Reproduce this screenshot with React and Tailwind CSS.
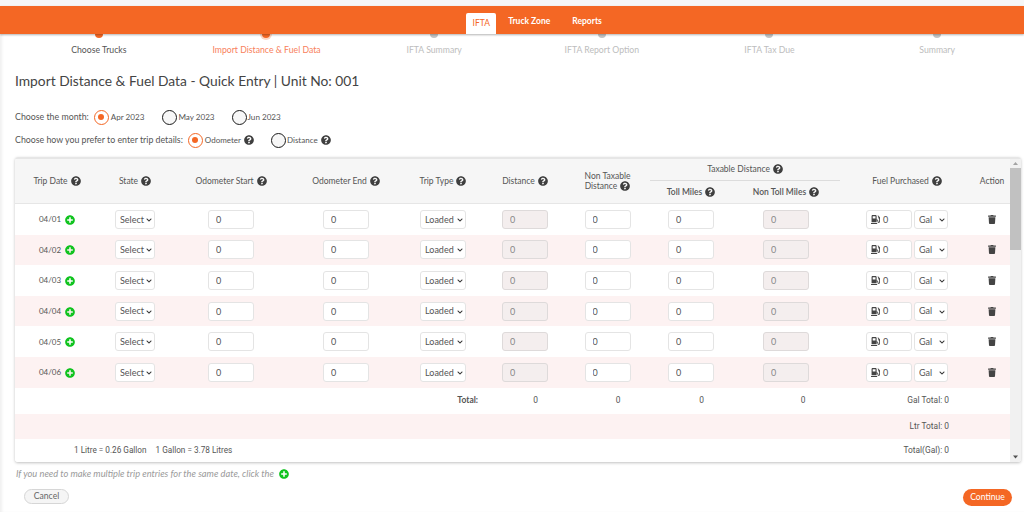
import React from 'react';
import { FaQuestionCircle, FaPlusCircle, FaTrash, FaGasPump, FaChevronDown } from 'react-icons/fa';

const steps = ['Choose Trucks', 'Import Distance & Fuel Data', 'IFTA Summary', 'IFTA Report Option', 'IFTA Tax Due', 'Summary'];
const dates = ['04/01', '04/02', '04/03', '04/04', '04/05', '04/06'];
const cols = 'grid grid-cols-[84px_72px_120px_110px_84px_80px_85px_82px_108px_134px_36px]';

function Help() {
  return <FaQuestionCircle className="inline-block w-[10px] h-[10px] text-[#3f3f3f] ml-[3px] align-[-2px]" />;
}

function Radio({ on, className = '' }) {
  if (on) {
    return (
      <span className={`shrink-0 w-[15px] h-[15px] rounded-full border border-[#f46724] flex items-center justify-center bg-white ${className}`}>
        <span className="w-[6px] h-[6px] rounded-full bg-[#f46724]" />
      </span>
    );
  }
  return <span className={`shrink-0 w-[15px] h-[15px] rounded-full border border-[#1a1a1a] bg-[#f7f7f7] ${className}`} />;
}

function Box({ disabled }) {
  return (
    <input
      defaultValue="0"
      readOnly
      className={`w-[46px] h-[19px] rounded-[3px] border pl-[7px] text-[9px] outline-none ${
        disabled ? 'bg-[#f4eeee] border-[#dedada] text-[#888]' : 'bg-white border-[#e4e4e4] text-[#555]'
      }`}
    />
  );
}

function Sel({ label, width }) {
  return (
    <div className={`relative ${width} h-[19px]`}>
      <select className="block appearance-none w-full h-full rounded-[3px] border border-[#e4e4e4] bg-white pl-[4px] text-[9px] text-[#555] outline-none">
        <option>{label}</option>
      </select>
      <FaChevronDown className="absolute right-[3px] top-[7px] w-[6px] h-[6px] text-[#333] pointer-events-none" />
    </div>
  );
}

function HeadCell({ children, className = '' }) {
  return <div className={`row-span-2 flex items-center justify-center text-center leading-[10px] ${className}`}>{children}</div>;
}

function Row({ date, pink }) {
  return (
    <div className={`${cols} h-[30.6px] items-center justify-items-center ${pink ? 'bg-[#fdf2f2]' : 'bg-white'}`}>
      <div className="flex items-center text-[8px] text-[#555]">
        {date}
        <FaPlusCircle className="w-[10px] h-[10px] text-[#10c31f] ml-[4px] mt-[1px]" />
      </div>
      <Sel label="Select" width="w-[40px]" />
      <Box />
      <Box />
      <Sel label="Loaded" width="w-[46px]" />
      <Box disabled />
      <Box />
      <Box />
      <Box disabled />
      <div className="flex gap-[2px]">
        <div className="flex items-center w-[46px] h-[19px] rounded-[3px] border border-[#e4e4e4] bg-white pl-[4px] text-[9px] text-[#555]">
          <FaGasPump className="w-[9px] h-[9px] text-[#444] mr-[3px]" />0
        </div>
        <Sel label="Gal" width="w-[34px]" />
      </div>
      <FaTrash className="w-[8px] h-[9px] text-[#444]" />
    </div>
  );
}

export default function App() {
  return (
    <div className="h-[512px] w-[1024px] overflow-hidden bg-white text-[#555] font-['Lato',sans-serif] shadow-[inset_3px_0_3px_-1px_#f0f0f0]">
      {/* Top bar */}
      <div className="h-[6px] bg-[#f6f6f6]" />
      <div className="relative z-10 h-[28px] bg-[#f46724] shadow-[0_1px_2px_rgba(0,0,0,0.3)] flex justify-center items-end text-[8.5px] font-bold text-white">
        <div className="flex items-end pl-[44px]">
          <div className="w-[30px] h-[21px] bg-white rounded-t-[2px] text-[#f46724] font-normal flex items-center justify-center">IFTA</div>
          <div className="ml-[12px] h-[21px] flex items-center mb-[2px]">Truck Zone</div>
          <div className="ml-[22px] h-[21px] flex items-center mb-[2px]">Reports</div>
        </div>
      </div>

      {/* Steps */}
      <div className="ml-[15px] mr-[3px] grid grid-cols-6 text-[8.7px] text-center">
        {steps.map((s, i) => (
          <div key={s} className="flex flex-col items-center">
            <span
              className={`w-[8px] h-[8px] rounded-full -mt-[4px] ${
                i < 2 ? 'bg-[#f46724]' : 'bg-[#c4c4c4]'
              } ${i === 1 ? 'shadow-[0_0_0_2px_#fbd5c3]' : ''}`}
            />
            <span className={`mt-[6px] leading-[12px] ${i === 0 ? 'text-[#555]' : i === 1 ? 'text-[#f87f5c]' : 'text-[#bdbdbd]'}`}>{s}</span>
          </div>
        ))}
      </div>

      <h1 className="ml-[15px] mt-[15px] text-[13.8px] leading-[20px] text-[#444]">Import Distance &amp; Fuel Data - Quick Entry | Unit No: 001</h1>

      {/* Options */}
      <div className="ml-[15px] mt-[18px] h-[16px] flex items-center text-[8.8px]">
        <span>Choose the month:</span>
        <Radio on className="ml-[5px]" />
        <span className="ml-[2px] text-[8.1px]">Apr 2023</span>
        <Radio className="ml-[18px]" />
        <span className="ml-[1px] text-[8.1px]">May 2023</span>
        <Radio className="ml-[17px]" />
        <span className="ml-[1px] text-[8.1px]">Jun 2023</span>
      </div>
      <div className="ml-[15px] mt-[7px] h-[16px] flex items-center text-[8.8px]">
        <span>Choose how you prefer to enter trip details:</span>
        <Radio on className="ml-[5px]" />
        <span className="ml-[2px] text-[8px]">Odometer<Help /></span>
        <Radio className="ml-[17px]" />
        <span className="ml-[1px] text-[8px]">Distance<Help /></span>
      </div>

      {/* Table */}
      <div className="ml-[15px] mt-[9px] w-[1006px] h-[305px] rounded-[3px] border-t-2 border-[#e6e6e6] shadow-[0_1px_3px_rgba(0,0,0,0.25)] flex overflow-hidden">
        <div className="w-[995px]">
          <div className={`${cols} grid-rows-[22px_22px] h-[45px] bg-[#f6f6f6] border-b border-[#e6e6e6] text-[8.5px] text-[#555]`}>
            <HeadCell><span>Trip Date<Help /></span></HeadCell>
            <HeadCell><span>State<Help /></span></HeadCell>
            <HeadCell><span>Odometer Start<Help /></span></HeadCell>
            <HeadCell><span>Odometer End<Help /></span></HeadCell>
            <HeadCell><span>Trip Type<Help /></span></HeadCell>
            <HeadCell><span>Distance<Help /></span></HeadCell>
            <HeadCell><span>Non Taxable<br />Distance<Help /></span></HeadCell>
            <div className="col-span-2 flex items-center justify-center border-b border-[#dcdcdc]"><span>Taxable Distance<Help /></span></div>
            <HeadCell className="col-start-10 row-start-1"><span>Fuel Purchased<Help /></span></HeadCell>
            <HeadCell className="col-start-11 row-start-1"><span>Action</span></HeadCell>
            <div className="col-start-8 row-start-2 flex items-center justify-center font-semibold"><span>Toll Miles<Help /></span></div>
            <div className="col-start-9 row-start-2 flex items-center justify-center font-semibold"><span>Non Toll Miles<Help /></span></div>
          </div>

          {dates.map((d, i) => (
            <Row key={d} date={d} pink={i % 2 === 1} />
          ))}

          <div className={`${cols} h-[26px] items-center justify-items-center bg-white text-[8.4px] font-['Roboto',sans-serif]`}>
            <div className="col-start-5 justify-self-end font-bold text-[#555] mr-[7px] font-['Lato',sans-serif] text-[8.5px]">Total:</div>
            <div className="ml-[21px]">0</div>
            <div className="ml-[21px]">0</div>
            <div className="ml-[21px]">0</div>
            <div className="ml-[34px]">0</div>
            <div className="justify-self-end pr-[25px]">Gal Total: 0</div>
          </div>
          <div className={`${cols} h-[25px] items-center justify-items-center bg-[#fdf2f2] text-[8.4px] font-['Roboto',sans-serif]`}>
            <div className="col-start-10 justify-self-end pr-[25px]">Ltr Total: 0</div>
          </div>
          <div className={`${cols} h-[24px] items-center justify-items-center bg-white text-[8.4px] font-['Roboto',sans-serif]`}>
            <div className="col-span-3 justify-self-start pl-[59px] whitespace-nowrap text-[8.2px]">1 Litre = 0.26 Gallon<span className="ml-[9px]">1 Gallon = 3.78 Litres</span></div>
            <div className="col-start-10 justify-self-end pr-[25px]">Total(Gal): 0</div>
          </div>
        </div>

        {/* Scrollbar */}
        <div className="w-[11px] bg-[#f1f1f1] flex flex-col items-center justify-between">
          <div className="w-full flex flex-col items-center">
            <svg width="7" height="9" viewBox="0 0 7 9"><path d="M3.5 3 6 6H1z" fill="#a3a3a3" /></svg>
            <div className="w-full h-[82px] bg-[#c1c1c1]" />
          </div>
          <svg width="7" height="11" viewBox="0 0 7 11"><path d="M3.5 7.5 6 4.5H1z" fill="#505050" /></svg>
        </div>
      </div>

      {/* Footer */}
      <div className="ml-[16px] mt-[5px] h-[14px] flex items-center text-[9.3px] italic text-[#9a9a9a]">
        If you need to make multiple trip entries for the same date, click the
        <FaPlusCircle className="w-[10px] h-[10px] text-[#10c31f] ml-[5px]" />
      </div>
      <div className="mt-[8px] ml-[24px] mr-[12px] flex justify-between items-start">
        <button className="w-[45px] h-[15px] rounded-full border border-[#d6d6d6] bg-[#f5f5f5] text-[8.6px] leading-[13px] text-[#666]">Cancel</button>
        <button className="w-[49px] h-[17px] rounded-full bg-[#f46724] text-[8.6px] text-white">Continue</button>
      </div>
    </div>
  );
}
